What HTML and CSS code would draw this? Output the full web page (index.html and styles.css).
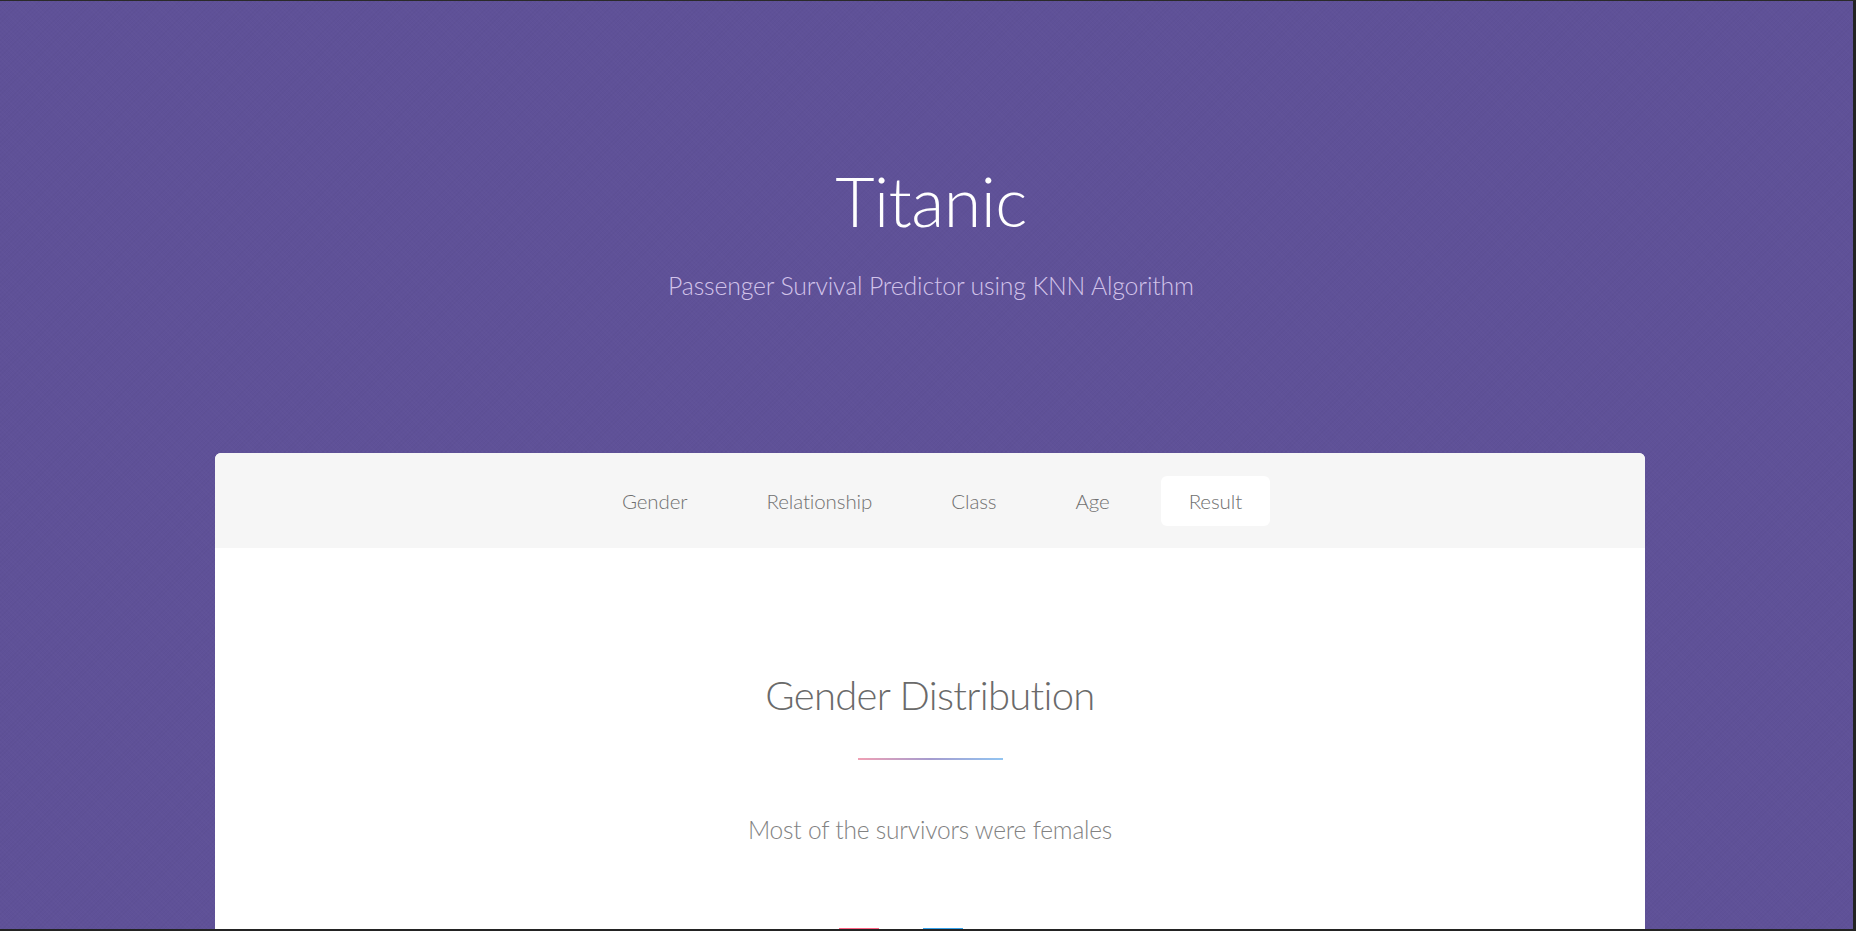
FILE: index.html
```html
<!DOCTYPE html>
<html lang="en">
<head>
<meta charset="utf-8">
<title>Titanic</title>
<link rel="stylesheet" href="styles.css">
</head>
<body>
<div class="frame">
  <div class="tabbar-accent"></div>
  <div class="page">
    <header class="hero">
      <h1 class="hero-title">Titanic</h1>
      <p class="hero-sub">Passenger Survival Predictor using KNN Algorithm</p>
    </header>
    <main class="card">
      <nav class="tabs">
        <a class="tab">Gender</a>
        <a class="tab">Relationship</a>
        <a class="tab">Class</a>
        <a class="tab">Age</a>
        <a class="tab tab-active">Result</a>
      </nav>
      <section class="panel">
        <h2 class="panel-title">Gender Distribution</h2>
        <div class="divider"></div>
        <p class="panel-text">Most of the survivors were females</p>
        <div class="legend">
          <span class="legend-item"><span class="swatch swatch-pink"></span>Male</span>
          <span class="legend-item"><span class="swatch swatch-blue"></span>Female</span>
        </div>
      </section>
    </main>
  </div>
</div>
</body>
</html>
```

FILE: styles.css
```css
* { box-sizing: border-box; }
html, body { margin: 0; padding: 0; }
body {
  background: #222222;
  font-family: Lato, "Open Sans", "Liberation Sans", sans-serif;
  font-weight: 300;
}
.frame {
  position: relative;
  width: 1856px;
  height: 931px;
  border-top: 1px solid #2a2a2a;
  border-right: 3px solid #232323;
  border-bottom: 2px solid #232323;
  overflow: hidden;
  background: #5f5198;
}
.tabbar-accent {
  position: absolute;
  top: -1px;
  left: 0;
  width: 88px;
  height: 1px;
  background: #1a7fd8;
}
.page {
  height: 100%;
  overflow: hidden;
  background-color: #5f5198;
  background-image:
    repeating-linear-gradient(45deg, rgba(255,255,255,0.012) 0 1px, transparent 1px 3px),
    repeating-linear-gradient(-45deg, rgba(0,0,0,0.02) 0 1px, transparent 1px 3px);
}
.hero {
  height: 452px;
  padding-top: 159px;
  padding-left: 9px;
  text-align: center;
}
.hero-title {
  margin: 0;
  font-size: 68px;
  line-height: 82px;
  font-weight: 300;
  color: #ffffff;
  letter-spacing: -0.5px;
}
.hero-sub {
  margin: 28px 0 0;
  font-size: 24.8px;
  line-height: 31px;
  font-weight: 300;
  color: #d2c3ea;
  letter-spacing: -0.15px;
}
.card {
  width: 1430px;
  margin: 0 0 0 215px;
  background: #ffffff;
  border-radius: 6px 6px 0 0;
  overflow: hidden;
}
.tabs {
  height: 95px;
  background: #f6f6f6;
  display: flex;
  justify-content: center;
  align-items: center;
  gap: 23px;
  padding-left: 4px;
}
.tab {
  display: block;
  padding: 0 28px;
  height: 50px;
  line-height: 50px;
  border-radius: 6px;
  font-size: 20.5px;
  font-weight: 300;
  color: #707070;
  letter-spacing: -0.1px;
}
.tab-active {
  background: #ffffff;
}
.panel {
  padding-top: 124px;
  text-align: center;
}
.panel-title {
  margin: 0;
  font-size: 40px;
  line-height: 46px;
  font-weight: 300;
  color: #6a6a6a;
  letter-spacing: -0.7px;
}
.divider {
  width: 145px;
  height: 2px;
  margin: 40px auto 0;
  background: linear-gradient(90deg, #f0a0b4, #a59ccf 50%, #92c5f2);
}
.panel-text {
  margin: 53px 0 0;
  font-size: 24.5px;
  line-height: 34px;
  font-weight: 300;
  color: #828282;
  letter-spacing: -0.2px;
}
.legend {
  margin-top: 81px;
  display: flex;
  justify-content: center;
  gap: 10px;
  font-family: "Liberation Sans", Arial, sans-serif;
  font-size: 12px;
  color: #666;
  padding-right: 10px;
}
.legend-item {
  display: flex;
  align-items: flex-start;
  gap: 8px;
}
.swatch {
  display: inline-block;
  width: 40px;
  height: 12px;
  border: 2px solid;
}
.swatch-pink { background: rgba(255,99,132,0.5); border-color: #ff6384; }
.swatch-blue { background: rgba(54,162,235,0.5); border-color: #36a2eb; }
```
